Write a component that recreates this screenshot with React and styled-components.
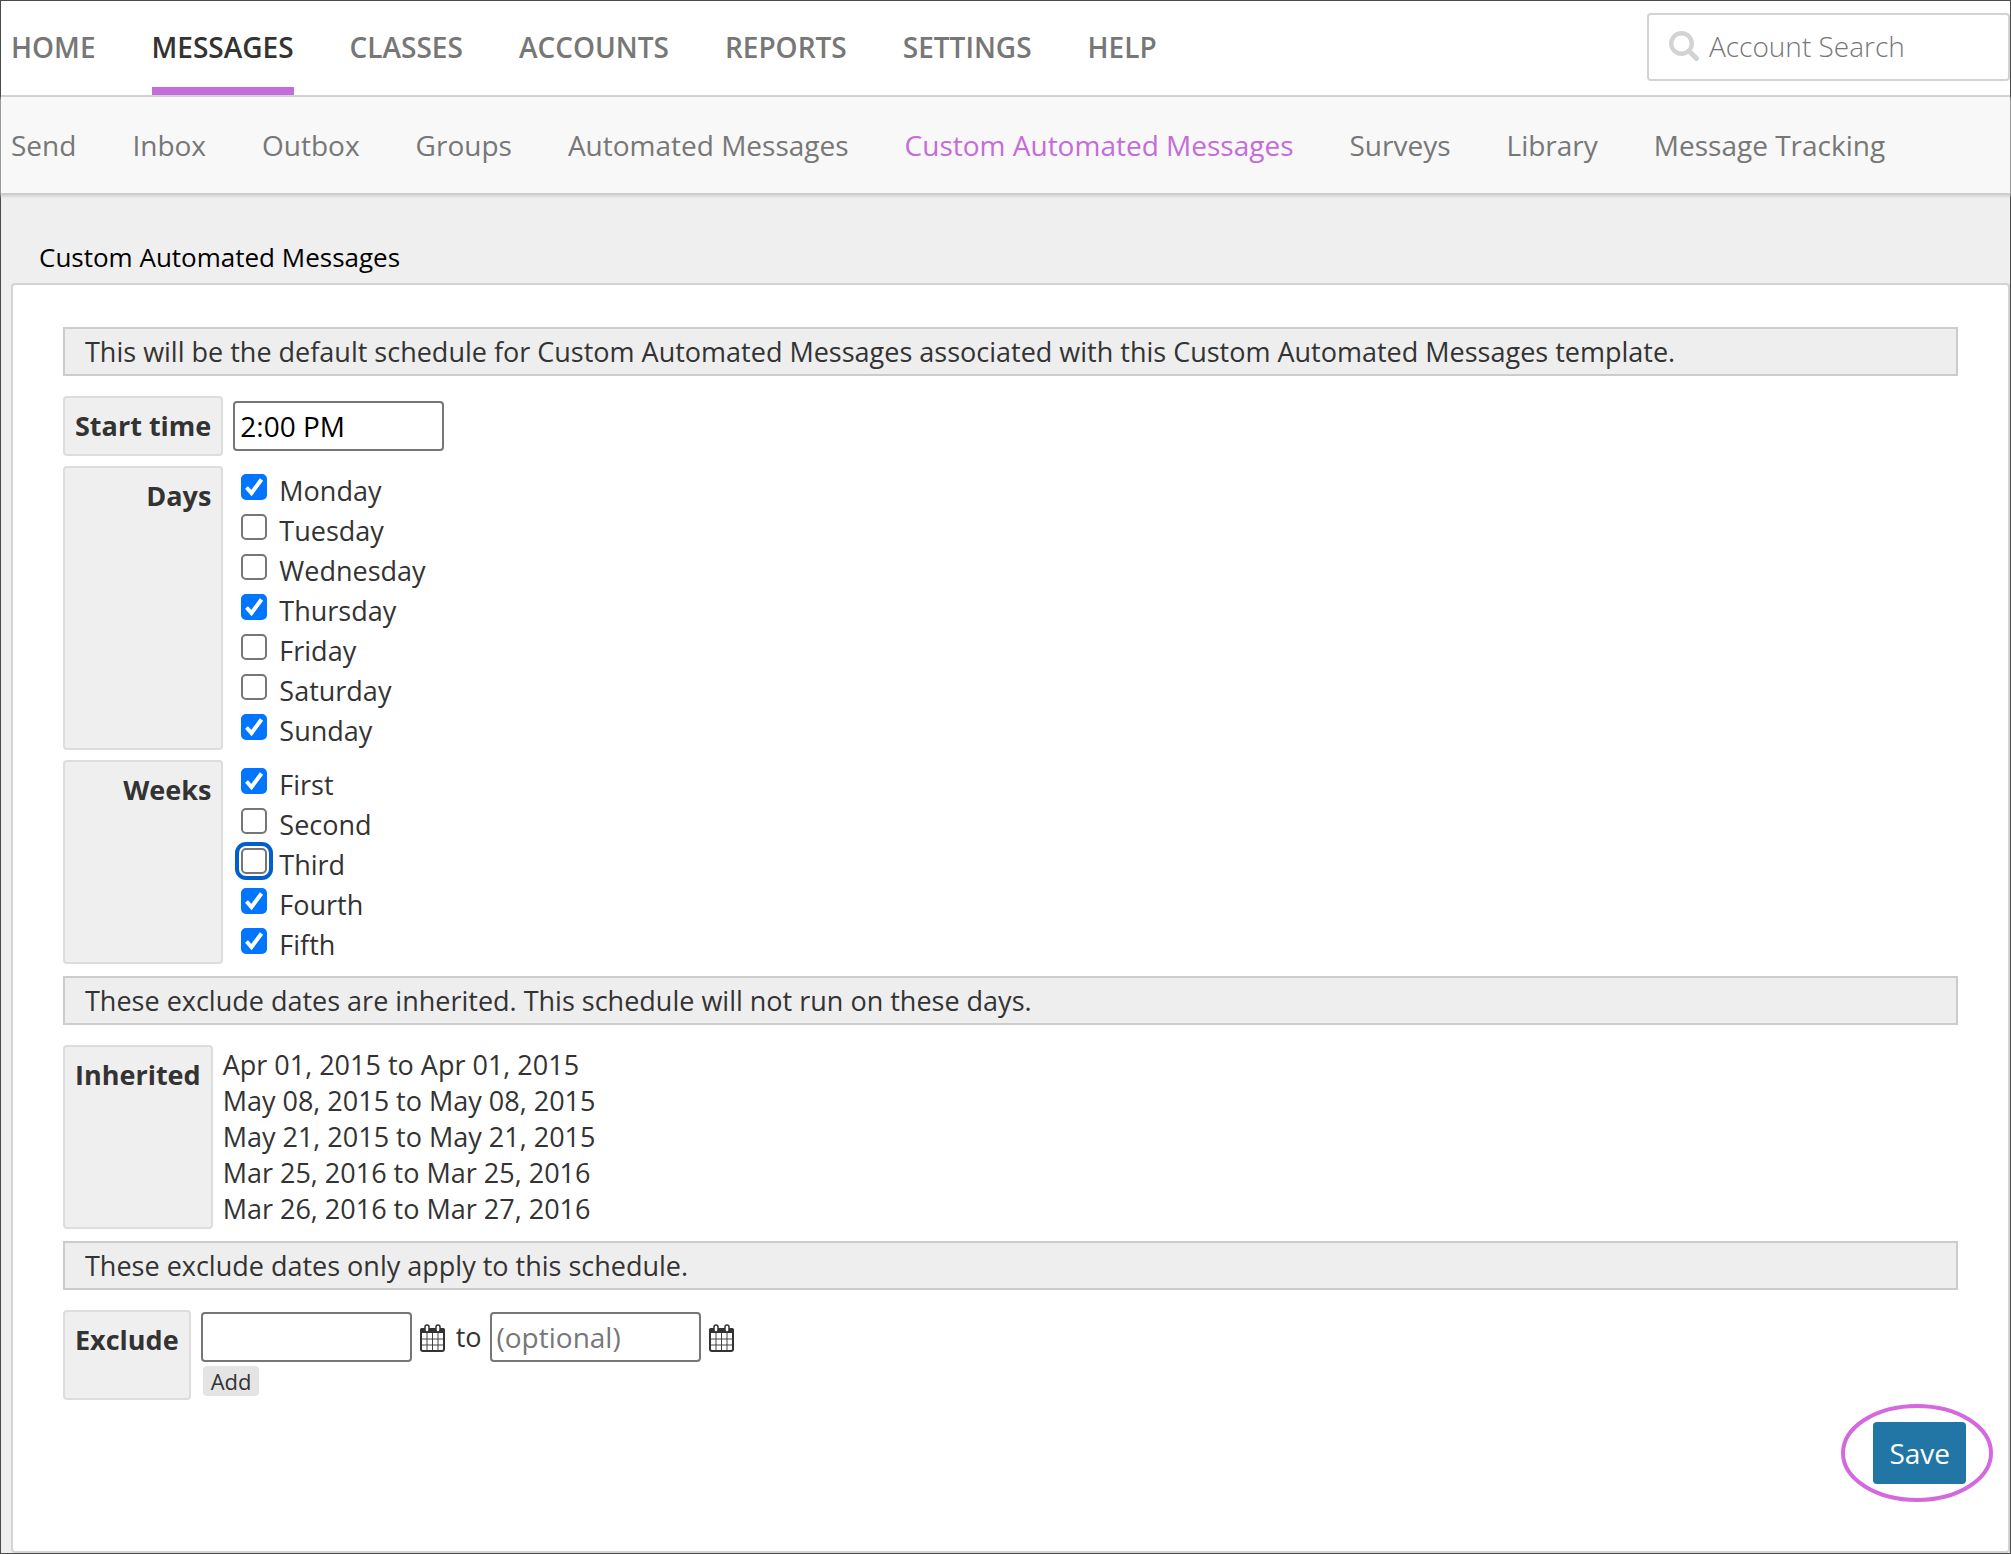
import React, { useEffect, useRef } from "react";
import styled, { createGlobalStyle } from "styled-components";

const GlobalStyle = createGlobalStyle`
  *, *::before, *::after { box-sizing: border-box; }
  body {
    margin: 0;
    background: #efefef;
    color: #333;
    font: 27px/36px "Open Sans", "Noto Sans", sans-serif;
  }
  input, button { font: inherit; margin: 0; }
`;

const Page = styled.div`
  display: flex;
  flex-direction: column;
  min-height: 100vh;
  border: 1px solid #4a4a4a;
`;

const Header = styled.header`
  display: flex;
  justify-content: space-between;
  height: 96px;
  background: #fff;
  border-bottom: 2px solid #d3d3d3;
`;

const Nav = styled.nav`
  display: flex;
  gap: 56px;
  padding-left: 10px;
  white-space: nowrap;
`;

const MainLink = styled.a`
  display: flex;
  align-items: center;
  padding-top: 6px;
  border-bottom: 8px solid ${(p) => (p.$active ? "#c46cd9" : "transparent")};
  color: ${(p) => (p.$active ? "#333" : "#777")};
  font-size: 28px;
  font-weight: 600;
  text-decoration: none;
`;

const SearchBox = styled.label`
  display: flex;
  align-items: center;
  gap: 10px;
  width: 363px;
  height: 68px;
  margin-top: 12px;
  padding: 0 0 2px 20px;
  border: 2px solid #d3d3d3;
  border-radius: 4px;
`;

const SearchInput = styled.input`
  flex: 1;
  min-width: 0;
  padding: 0;
  border: 0;
  outline: 0;
  background: transparent;
  font-size: 28px;
  font-weight: 300;
  &::placeholder { color: #777; opacity: 1; }
`;

const SubBar = styled(Nav)`
  align-items: center;
  height: 96px;
  background: #f8f8f8;
  box-shadow: 0 2px 3px 1px #c8c8c8;
`;

const SubLink = styled.a`
  color: ${(p) => (p.$active ? "#c46cd9" : "#777")};
  font-size: 28px;
  text-decoration: none;
`;

const Main = styled.main`
  display: flex;
  flex: 1;
  flex-direction: column;
  padding: 46px 0 0 10px;
`;

const Title = styled.h1`
  margin: 0 0 8px;
  padding-left: 28px;
  color: #000;
  font-size: 26px;
  font-weight: 400;
  line-height: 36px;
`;

const Panel = styled.form`
  flex: 1;
  padding: 42px 50px;
  background: #fff;
  border: 2px solid #d3d3d3;
  border-radius: 4px;
`;

const Notice = styled.p`
  margin: 0;
  padding: 5px 20px 4px;
  background: #eee;
  border: 2px solid #ccc;
`;

const Fields = styled.div`
  display: grid;
  grid-template-columns: auto 1fr;
  gap: 10px;
  margin: 20px 0 12px;
`;

const cell = `
  padding: 10px;
  background: #efefef;
  border: 2px solid #ddd;
  border-radius: 4px;
  font-weight: 700;
  text-align: right;
`;
const FieldLabel = styled.label`${cell}`;
const FieldName = styled.div`${cell}`;

const Row = styled.div`
  display: flex;
  align-items: center;
`;

const Choices = styled.div`
  padding: 2px 0 2px 8px;
`;

const Choice = styled.label`
  display: flex;
  gap: 12px;
  width: max-content;
  height: 40px;
  padding-top: 5px;
`;

const Tick = styled.span`
  display: grid;
  width: 26px;
  height: 26px;
  margin-top: 1px;
  svg {
    grid-area: 1 / 1;
    visibility: hidden;
    pointer-events: none;
  }
  input:checked + svg { visibility: visible; }
`;

const TickInput = styled.input`
  grid-area: 1 / 1;
  width: 26px;
  height: 26px;
  appearance: none;
  background: #fff;
  border: 2px solid #767676;
  border-radius: 5px;
  &:checked { background: #0075ff; border-color: #0075ff; }
  &:focus { outline: none; box-shadow: 0 0 0 2px #fff, 0 0 0 6px #005fcc; }
`;

const TextInput = styled.input`
  width: 211px;
  height: 50px;
  padding: 0 5px;
  background: #fff;
  border: 2px solid #767676;
  border-radius: 4px;
  color: #000;
  font-size: 28px;
  &::placeholder { color: #777; opacity: 1; }
`;

const Dates = styled.ul`
  margin: 0;
  padding: 2px 0;
  list-style: none;
`;

const Excludes = styled.div`
  display: flex;
  flex-direction: column;
  align-items: flex-start;
  gap: 4px;
  padding: 2px 0 4px;
`;

const ToLabel = styled.label`
  padding-right: 8px;
`;

const IconButton = styled.button`
  display: flex;
  padding: 2px 11px 0 8px;
  background: none;
  border: 0;
`;

const AddButton = styled.button`
  height: 30px;
  margin-left: 2px;
  padding: 0 8px;
  background: #e4e4e4;
  border: 0;
  border-radius: 4px;
  color: #333;
  font-size: 22px;
  line-height: 30px;
`;

const Actions = styled.div`
  display: flex;
  justify-content: flex-end;
  margin: 22px -8px 0 0;
`;

const SaveWrap = styled.div`
  position: relative;
`;

const Ring = styled.svg`
  position: absolute;
  top: -18px;
  left: -32px;
  pointer-events: none;
`;

const SaveButton = styled.button`
  height: 62px;
  padding: 0 16px;
  background: #2176a5;
  border: 0;
  border-radius: 4px;
  color: #fff;
  font-size: 28px;
`;

const MAIN = ["Home", "Messages", "Classes", "Accounts", "Reports", "Settings", "Help"];
const SUB = ["Send", "Inbox", "Outbox", "Groups", "Automated Messages", "Custom Automated Messages", "Surveys", "Library", "Message Tracking"];
const DAYS = [["Monday", true], ["Tuesday"], ["Wednesday"], ["Thursday", true], ["Friday"], ["Saturday"], ["Sunday", true]];
const WEEKS = [["First", true], ["Second"], ["Third"], ["Fourth", true], ["Fifth", true]];
const INHERITED = [
  "Apr 01, 2015 to Apr 01, 2015",
  "May 08, 2015 to May 08, 2015",
  "May 21, 2015 to May 21, 2015",
  "Mar 25, 2016 to Mar 25, 2016",
  "Mar 26, 2016 to Mar 27, 2016",
];

function CalendarIcon() {
  return (
    <svg width="25" height="28" viewBox="0 0 25 28" fill="none" aria-hidden="true">
      <rect x="1" y="5" width="23" height="22" rx="2" stroke="#333" strokeWidth="2" fill="#fff" />
      <path d="M0 9V6a2 2 0 0 1 2-2h21a2 2 0 0 1 2 2v3z" fill="#333" />
      <path d="M2 15h21M2 21h21M7 9v17M12.500 9v17M18 9v17" stroke="#444" strokeWidth="1" />
      <rect x="5" y="1" width="4" height="7" rx="2" fill="#fff" stroke="#333" strokeWidth="1.500" />
      <rect x="16" y="1" width="4" height="7" rx="2" fill="#fff" stroke="#333" strokeWidth="1.500" />
    </svg>
  );
}

function ChoiceGroup({ name, items, focused }) {
  const focusRef = useRef(null);
  useEffect(() => {
    if (focusRef.current) focusRef.current.focus({ preventScroll: true });
  }, []);
  const id = `${name.toLowerCase()}-label`;
  return (
    <>
      <FieldName id={id}>{name}</FieldName>
      <Choices role="group" aria-labelledby={id}>
        {items.map(([text, on]) => (
          <Choice key={text}>
            <Tick>
              <TickInput type="checkbox" defaultChecked={!!on} ref={text === focused ? focusRef : null} />
              <svg width="26" height="26" viewBox="0 0 26 26" aria-hidden="true">
                <path d="M5.500 13.500L10.500 19L20.500 5.500" fill="none" stroke="#fff" strokeWidth="4" />
              </svg>
            </Tick>
            {text}
          </Choice>
        ))}
      </Choices>
    </>
  );
}

export default function App() {
  return (
    <Page>
      <GlobalStyle />
      <Header>
        <Nav aria-label="Main">
          {MAIN.map((t) => (
            <MainLink key={t} href="#" $active={t === "Messages"}>{t.toUpperCase()}</MainLink>
          ))}
        </Nav>
        <SearchBox>
          <svg width="30" height="30" viewBox="0 0 30 30" fill="none" stroke="#d3d3d3" aria-hidden="true">
            <circle cx="12.500" cy="12.500" r="10.300" strokeWidth="4.400" />
            <path d="M20 20l7.500 7.500" strokeWidth="5" strokeLinecap="round" />
          </svg>
          <SearchInput type="text" aria-label="Account Search" placeholder="Account Search" />
        </SearchBox>
      </Header>
      <SubBar aria-label="Messages">
        {SUB.map((t) => (
          <SubLink key={t} href="#" $active={t === "Custom Automated Messages"}>{t}</SubLink>
        ))}
      </SubBar>
      <Main>
        <Title>Custom Automated Messages</Title>
        <Panel onSubmit={(e) => e.preventDefault()}>
          <Notice>
            This will be the default schedule for Custom Automated Messages associated with this Custom Automated Messages template.
          </Notice>
          <Fields>
            <FieldLabel htmlFor="start">Start time</FieldLabel>
            <Row>
              <TextInput id="start" type="text" defaultValue="2:00 PM" />
            </Row>
            <ChoiceGroup name="Days" items={DAYS} />
            <ChoiceGroup name="Weeks" items={WEEKS} focused="Third" />
          </Fields>
          <Notice>These exclude dates are inherited. This schedule will not run on these days.</Notice>
          <Fields>
            <FieldName>Inherited</FieldName>
            <Dates>
              {INHERITED.map((d) => <li key={d}>{d}</li>)}
            </Dates>
          </Fields>
          <Notice>These exclude dates only apply to this schedule.</Notice>
          <Fields>
            <FieldLabel htmlFor="from">Exclude</FieldLabel>
            <Excludes>
              <Row>
                <TextInput id="from" type="text" />
                <IconButton type="button" aria-label="Pick start date"><CalendarIcon /></IconButton>
                <ToLabel htmlFor="until">to</ToLabel>
                <TextInput id="until" type="text" placeholder="(optional)" />
                <IconButton type="button" aria-label="Pick end date"><CalendarIcon /></IconButton>
              </Row>
              <AddButton type="button">Add</AddButton>
            </Excludes>
          </Fields>
          <Actions>
            <SaveWrap>
              <SaveButton type="submit">Save</SaveButton>
              <Ring width="152" height="98" viewBox="0 0 152 98" aria-hidden="true">
                <ellipse cx="76" cy="49" rx="74" ry="47" fill="none" stroke="#d468de" strokeWidth="4" />
              </Ring>
            </SaveWrap>
          </Actions>
        </Panel>
      </Main>
    </Page>
  );
}
